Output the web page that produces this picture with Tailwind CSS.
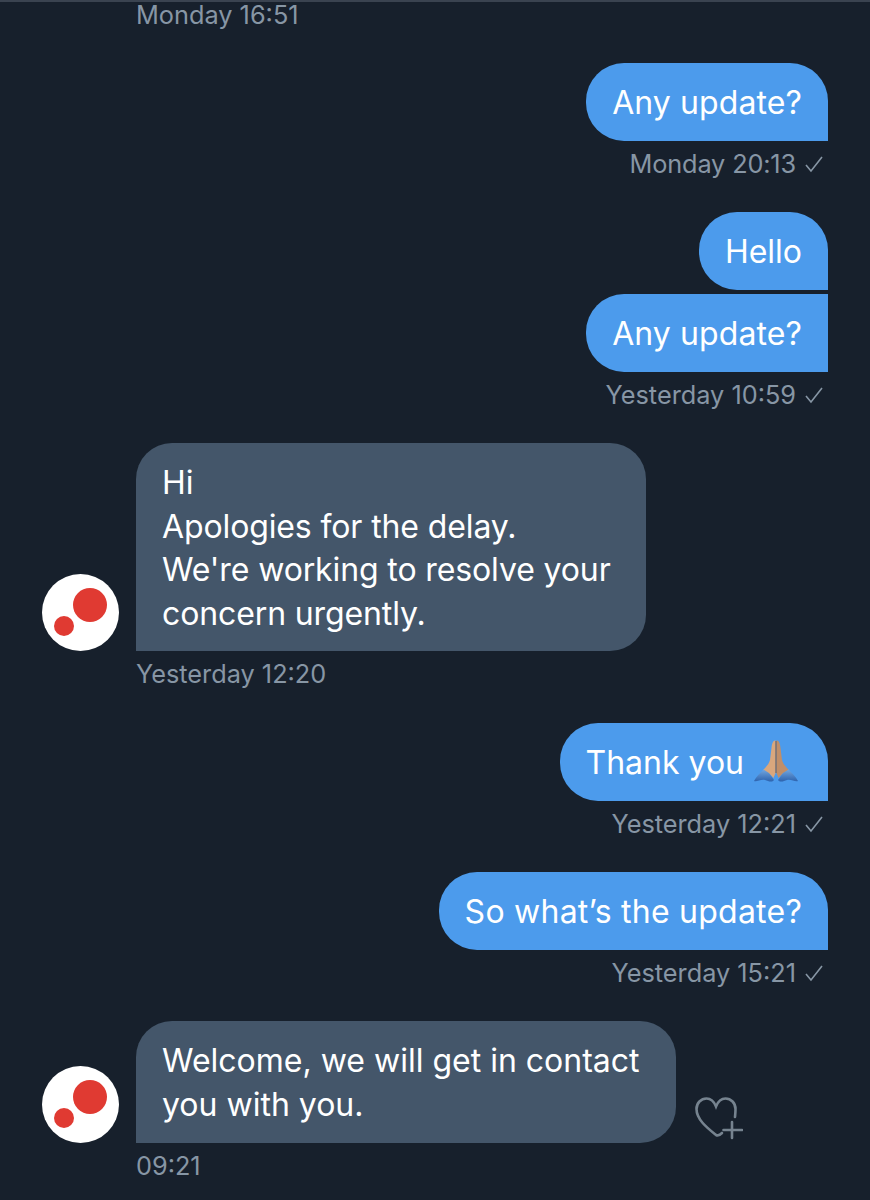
<!DOCTYPE html>
<html lang="en">

<head>
    <meta charset="UTF-8">
    <title>Messages</title>
    <script src="https://cdn.jsdelivr.net/npm/@tailwindcss/browser@4"></script>
</head>

<body class="bg-[#17202c] font-['Inter','Liberation_Sans',sans-serif] text-white overflow-hidden">
    <div class="w-[870px] h-[1200px] overflow-hidden border-t-2 border-[#3a4350]">

        <!-- first timestamp, cut off by the top of the screen -->
        <div class="h-[26px] pl-[136px] flex items-center text-[25.3px] text-[#8796a5]">Monday 16:51</div>

        <div class="mt-[35px] pr-[42px] flex flex-col items-end">
            <div class="bg-[#4c9bec] h-[77.5px] pt-[2px] px-[26px] flex items-center text-[32px] tracking-[0.1px] rounded-[38px] rounded-br-none">Any update?</div>
            <div class="h-[46px] pr-[4px] flex items-center gap-[8px] text-[25.3px] tracking-[-0.15px] text-[#8796a5]">Monday 20:13
                <svg class="w-[20px] h-[18px]" viewBox="0 0 20 18" fill="none" stroke="#8796a5" stroke-width="1.6"><path d="M2 10l5 6L18 2" /></svg>
            </div>
        </div>

        <div class="mt-[25.5px] pr-[42px] flex flex-col items-end gap-[4.5px]">
            <div class="bg-[#4c9bec] h-[77.5px] pt-[2px] px-[26px] flex items-center text-[32px] rounded-[38px] rounded-br-none">Hello</div>
            <div class="bg-[#4c9bec] h-[77.5px] pt-[2px] px-[26px] flex items-center text-[32px] tracking-[0.1px] rounded-l-[38px] rounded-br-none">Any update?</div>
        </div>
        <div class="pr-[42px] flex justify-end">
            <div class="h-[46px] pr-[4px] flex items-center gap-[8px] text-[25.3px] text-[#8796a5]">Yesterday 10:59
                <svg class="w-[20px] h-[18px]" viewBox="0 0 20 18" fill="none" stroke="#8796a5" stroke-width="1.6"><path d="M2 10l5 6L18 2" /></svg>
            </div>
        </div>

        <div class="mt-[25.5px] pl-[42px] flex items-end gap-[17px]">
            <svg class="w-[77px] h-[77px] shrink-0" viewBox="0 0 77 77">
                <circle cx="38.5" cy="38.5" r="38.5" fill="#fff" />
                <circle cx="48" cy="31" r="17" fill="#e03a32" />
                <circle cx="22" cy="52" r="10" fill="#e03a32" />
            </svg>
            <div class="bg-[#44566a] w-[510px] px-[26px] pt-[18px] pb-[16px] text-[32px] tracking-[-0.12px] leading-[43.5px] rounded-[36px] rounded-bl-none">Hi<br>Apologies for the delay.<br>We're working to resolve your concern urgently.</div>
        </div>
        <div class="h-[46px] pl-[136px] flex items-center text-[25.3px] text-[#8796a5]">Yesterday 12:20</div>

        <div class="mt-[26px] pr-[42px] flex flex-col items-end">
            <div class="bg-[#4c9bec] h-[77.5px] pl-[26px] pr-[30px] flex items-center gap-[10px] text-[32px] rounded-[38px] rounded-br-none">
                <span class="pt-[2px]">Thank you</span>
                <svg class="w-[44px] h-[44px]" viewBox="0 0 44 44">
                    <defs>
                        <linearGradient id="sleeve" x1="0" y1="1" x2="0" y2="0">
                            <stop offset="0" stop-color="#2c62ad" />
                            <stop offset="1" stop-color="#74a9e2" />
                        </linearGradient>
                    </defs>
                    <path d="M0 41C2 37 6 33 10 29L15 33L20 40C18 43 14 41 11 40C7 39 3 42 0 41Z" fill="url(#sleeve)" />
                    <path d="M44 41C42 37 38 33 34 29L29 33L24 40C26 43 30 41 33 40C37 39 41 42 44 41Z" fill="url(#sleeve)" />
                    <path d="M21.500 0.500C19 0.500 18 3 17.500 8L16 20C15 24 12 27 9.500 29.500L15 33L19.500 38L21.500 33Z" fill="#d9a77d" />
                    <path d="M22.500 0.500C25 0.500 26 3 26.500 8L28 20C29 24 32 27 34.500 29.500L29 33L24.500 38L22.500 33Z" fill="#c08e68" />
                    <path d="M22 1V33" stroke="#835a3c" stroke-width="1" />
                </svg>
            </div>
            <div class="h-[46px] pr-[4px] flex items-center gap-[8px] text-[25.3px] text-[#8796a5]">Yesterday 12:21
                <svg class="w-[20px] h-[18px]" viewBox="0 0 20 18" fill="none" stroke="#8796a5" stroke-width="1.6"><path d="M2 10l5 6L18 2" /></svg>
            </div>
        </div>

        <div class="mt-[25.5px] pr-[42px] flex flex-col items-end">
            <div class="bg-[#4c9bec] h-[77.5px] pt-[2px] px-[26px] flex items-center text-[32px] tracking-[0.24px] rounded-[38px] rounded-br-none">So what’s the update?</div>
            <div class="h-[46px] pr-[4px] flex items-center gap-[8px] text-[25.3px] text-[#8796a5]">Yesterday 15:21
                <svg class="w-[20px] h-[18px]" viewBox="0 0 20 18" fill="none" stroke="#8796a5" stroke-width="1.6"><path d="M2 10l5 6L18 2" /></svg>
            </div>
        </div>

        <div class="mt-[25.5px] pl-[42px] flex items-end gap-[17px]">
            <svg class="w-[77px] h-[77px] shrink-0" viewBox="0 0 77 77">
                <circle cx="38.5" cy="38.5" r="38.5" fill="#fff" />
                <circle cx="48" cy="31" r="17" fill="#e03a32" />
                <circle cx="22" cy="52" r="10" fill="#e03a32" />
            </svg>
            <div class="bg-[#44566a] w-[540px] px-[26px] pt-[18px] pb-[17px] text-[32px] leading-[43.5px] rounded-[36px] rounded-bl-none">Welcome, we will get in contact you with you.</div>
            <svg class="w-[50px] h-[46px] shrink-0" viewBox="0 0 50 46" fill="none" stroke="#76838f" stroke-width="2.600" stroke-linecap="round">
                <path d="M29 36c-2 2-4 3-6 2C13 30 3.500 22 3.500 12C3.500 6 8 1.500 13.500 1.500c4 0 7.500 3 9.500 8c2-5 5.500-8 9.500-8c5.500 0 10 4.500 10 10.500c0 3-.3 5.500-.5 8" />
                <path d="M39 25V41M30.500 33H49" />
            </svg>
        </div>
        <div class="h-[46px] pl-[136px] flex items-center text-[25.3px] text-[#8796a5]">09:21</div>

    </div>
</body>

</html>
